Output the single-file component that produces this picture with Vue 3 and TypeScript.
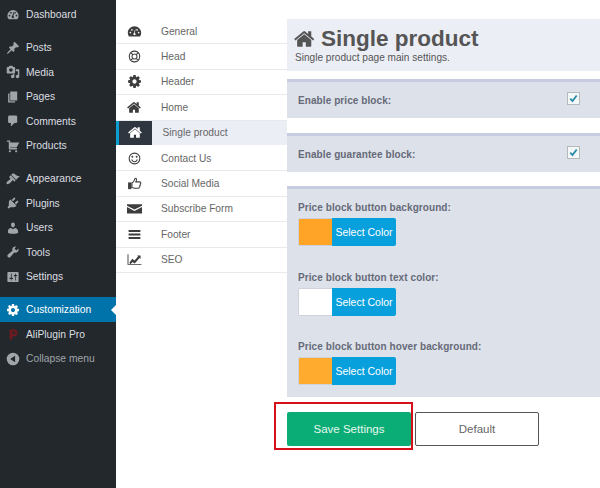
<script setup lang="ts">
interface SideItem { label: string; icon: string; active?: boolean; gap?: boolean; dim?: boolean }

const COG = 'M1152 896q0-106-75-181t-181-75-181 75-75 181 75 181 181 75 181-75 75-181zm512-109v222q0 12-8 23t-20 13l-185 28q-19 54-39 91 35 50 107 138 10 12 10 25t-9 23q-27 37-99 108t-94 71q-12 0-26-9l-138-108q-44 23-91 38-16 136-29 186-7 28-36 28h-222q-14 0-24.5-8.5t-11.5-21.5l-28-184q-49-16-90-37l-141 107q-10 9-25 9-14 0-25-11-126-114-165-168-7-10-7-23 0-12 8-23 15-21 51-66.5t54-70.5q-27-50-41-99l-183-27q-13-2-21-12.5t-8-23.5v-222q0-12 8-23t19-13l186-28q14-46 39-92-40-57-107-138-10-12-10-24 0-10 9-23 26-36 98.5-107.5t94.5-71.5q13 0 26 10l138 107q44-23 91-38 16-136 29-186 7-28 36-28h222q14 0 24.5 8.5t11.5 21.5l28 184q49 16 90 37l142-107q9-9 24-9 13 0 25 10 129 119 165 170 7 8 7 22 0 12-8 23-15 21-51 66.5t-54 70.5q26 50 41 98l183 28q13 2 21 12.5t8 23.5z'
const HOME = 'M1408 992v480q0 26-19 45t-45 19h-384v-384h-256v384h-384q-26 0-45-19t-19-45v-480q0-1 .5-3t.5-3l575-474 575 474q1 2 1 6zm223-69l-62 74q-8 9-21 11h-3q-13 0-21-7l-692-577-692 577q-12 8-24 7-13-2-21-11l-62-74q-8-10-7-23.5t11-21.5l719-599q32-26 76-26t76 26l244 204v-195q0-14 9-23t23-9h192q14 0 23 9t9 23v408l219 182q10 8 11 21.5t-7 23.5z'
const GAUGE = 'M896 256C456 256 96 616 96 1056c0 150 42 290 114 410 12 20 34 30 56 30h1260c22 0 44-10 56-30 72-120 114-260 114-410 0-440-360-800-800-800zM400 1120a96 96 0 1 1 0-192 96 96 0 0 1 0 192zm192-320a96 96 0 1 1 0-192 96 96 0 0 1 0 192zm304 540c-80 0-144-64-144-144 0-60 36-110 88-132l120-420 60 16-100 420c50 24 120 70 120 116 0 80-64 144-144 144zm304-540a96 96 0 1 1 0-192 96 96 0 0 1 0 192zm192 320a96 96 0 1 1 0-192 96 96 0 0 1 0 192z'
const LIFE_LINES = 'M896 256a640 640 0 1 0 .01 0zM896 596a300 300 0 1 0 .01 0zM684 684L443 443M1108 684L1349 443M684 1108L443 1349M1108 1108L1349 1349'
const SMILE = 'M896 192a704 704 0 1 0 0 1408 704 704 0 0 0 0-1408zm0 128a576 576 0 1 1 0 1152 576 576 0 0 1 0-1152zM640 576a112 112 0 1 0 0 224 112 112 0 0 0 0-224zm512 0a112 112 0 1 0 0 224 112 112 0 0 0 0-224zM500 1010c60 210 220 330 396 330s336-120 396-330l-122-36c-44 150-154 238-274 238s-230-88-274-238z'
const CUFF = 'M128 768h400v800H128z'
const HAND = 'M590 830C700 790 860 600 900 430C920 330 930 270 1010 270C1130 270 1160 400 1120 520L1060 700H1500C1600 700 1650 770 1650 840C1650 900 1620 940 1580 970C1610 1040 1590 1100 1540 1140C1560 1210 1530 1270 1480 1300C1490 1400 1420 1470 1310 1470H1040C860 1470 720 1400 590 1370Z'
const MAIL = 'M0 384h1792v180L896 1030 0 564zM0 720l896 460 896-460v760H0z'
const BARS = 'M192 352h1408v256H192zM192 768h1408v256H192zM192 1184h1408v256H192z'
const CHART = 'M64 256h110v1170h1554v110H64zM300 1240l340-420 260 190 420-470-120-110h420v400l-120-120-580 660-260-190-260 300z'

const PIN = 'M10.44 3.02l1.82-1.82 6.36 6.35-1.83 1.82c-1.05-.68-2.48-.57-3.41.36l-.75.75c-.92.93-1.04 2.35-.35 3.41l-1.83 1.82-2.41-2.41-2.8 2.79c-.42.42-3.38 2.71-3.8 2.29s1.86-3.39 2.28-3.81l2.79-2.79L4.1 9.36l1.83-1.82c1.05.69 2.48.57 3.4-.36l.75-.75c.93-.92 1.05-2.35.36-3.41z'
const MEDIA = 'M13 11V4c0-.55-.45-1-1-1h-1.670L9 1H5L3.670 3H2c-.55 0-1 .45-1 1v7c0 .55.45 1 1 1h10c.55 0 1-.45 1-1zM7 4.500c1.380 0 2.500 1.120 2.500 2.500S8.380 9.500 7 9.500 4.500 8.380 4.500 7 5.620 4.500 7 4.500zM14 6h5v10.500c0 1.380-1.120 2.500-2.500 2.500S14 17.880 14 16.500s1.120-2.500 2.500-2.500c.17 0 .34.020.5.050V9h-3V6zm-4 8.050V13h2v3.500c0 1.380-1.120 2.500-2.500 2.500S7 17.880 7 16.500 8.120 14 9.500 14c.17 0 .34.020.5.050z'
const PAGES = 'M6 15V2h10v13H6zm-1 1h8v2H3V5h2v11z'
const COMMENT = 'M5 2h9c1.100 0 2 .9 2 2v7c0 1.100-.9 2-2 2h-2l-5 5v-5H5c-1.100 0-2-.9-2-2V4c0-1.100.9-2 2-2z'
const CART = 'M6 13h9c.55 0 1 .45 1 1s-.45 1-1 1H5c-.55 0-1-.45-1-1V4H2c-.55 0-1-.45-1-1s.45-1 1-1h3c.55 0 1 .45 1 1v2h13l-4 7H6v1zm-.5 3c.83 0 1.500.67 1.500 1.500S6.330 19 5.500 19 4 18.330 4 17.500 4.670 16 5.500 16zm9 0c.83 0 1.500.67 1.500 1.500s-.670 1.500-1.500 1.500-1.500-.670-1.500-1.500.670-1.500 1.500-1.500z'
const BRUSH = 'M14.480 11.060L7.410 3.990l1.500-1.500c.5-.56 2.300-.47 3.510.32 1.210.8 1.430 1.280 2.910 2.100 1.180.64 2.450 1.260 4.450.85zm-.71.71L6.700 4.700 4.930 6.470c-.39.39-.39 1.020 0 1.410l1.060 1.060c.39.39.39 1.030 0 1.420-.6.6-1.430 1.110-2.210 1.690-.35.26-.7.53-1.010.84C1.430 13.230.18 16.500.9 17.170c.71.72 4.040-.46 5.370-1.860.37-.37.7-.74.99-1.130.57-.74 1.070-1.500 1.620-2.040.39-.39 1.020-.39 1.410 0l1.060 1.060c.39.39 1.020.39 1.410 0z'
const PLUG = 'M13.110 4.360L9.870 7.600 8 5.730l3.240-3.240c.35-.34 1.050-.2 1.560.32.52.51.66 1.210.31 1.550zm-8 1.770l.91-1.120 9.010 9.010-1.190.84c-.71.71-2.630 1.160-3.820 1.160H6.140L4.900 17.260c-.59.59-1.540.59-2.120 0-.59-.58-.59-1.530 0-2.120l1.240-1.240v-3.880c0-1.130.4-3.190 1.090-3.890zm7.260 3.970l3.240-3.240c.34-.35 1.040-.21 1.550.31.52.51.66 1.210.31 1.550l-3.240 3.250z'
const USER = 'M10 9.250c-2.270 0-2.730-3.440-2.730-3.440C7 4.020 7.820 2 9.970 2c2.160 0 2.980 2.020 2.710 3.810 0 0-.41 3.440-2.680 3.440zm0 2.570L12.720 10c2.390 0 4.520 2.330 4.520 4.530v2.490s-3.650 1.130-7.240 1.130c-3.650 0-7.240-1.130-7.240-1.130v-2.490c0-2.250 1.940-4.480 4.470-4.480z'
const WRENCH = 'M16.680 9.770c-1.340 1.340-3.300 1.670-4.950.99l-5.410 6.520c-.99.99-2.590.99-3.580 0s-.99-2.590 0-3.570l6.520-5.420c-.68-1.650-.35-3.610.99-4.950 1.280-1.280 3.120-1.620 4.720-1.060l-2.890 2.890 2.820 2.820 2.860-2.870c.53 1.580.18 3.390-1.080 4.650z'
const SLIDERS = 'M18 16V4c0-.55-.45-1-1-1H3c-.55 0-1 .45-1 1v12c0 .55.45 1 1 1h14c.55 0 1-.45 1-1zM8 11h1c.55 0 1 .45 1 1s-.45 1-1 1H8v1.500c0 .28-.22.5-.5.5s-.5-.22-.5-.5V13H6c-.55 0-1-.45-1-1s.45-1 1-1h1V5.500c0-.28.22-.5.5-.5s.5.22.5.5V11zm5-2h-1c-.55 0-1-.45-1-1s.45-1 1-1h1V5.500c0-.28.22-.5.5-.5s.5.22.5.5V7h1c.55 0 1 .45 1 1s-.45 1-1 1h-1v5.500c0 .28-.22.5-.5.5s-.5-.22-.5-.5V9z'
const FLAG = 'M3 1h11l3 3v6l-3 3H8v6H3zm5 4v4h5V5z'
const COLLAPSE = 'M10 1a9 9 0 1 0 0 18 9 9 0 0 0 0-18zm3 4.500v9L6 10z'
const WP_GAUGE = 'M10 3a8 8 0 0 0-8 8c0 2 .7 3.800 2 5h12c1.300-1.200 2-3 2-5a8 8 0 0 0-8-8zM5 12a1.200 1.200 0 1 1 0-2.400A1.200 1.200 0 0 1 5 12zm2-4a1.200 1.200 0 1 1 0-2.400A1.200 1.200 0 0 1 7 8zm3 6.500a1.800 1.800 0 0 1-1-3.300L10.500 6l1 .3-1 5a1.800 1.800 0 0 1-.5 3.200zM13 8a1.200 1.200 0 1 1 0-2.400A1.200 1.200 0 0 1 13 8zm2 4a1.200 1.200 0 1 1 0-2.400A1.200 1.200 0 0 1 15 12z'

const sideGroups: SideItem[][] = [
  [{ label: 'Dashboard', icon: WP_GAUGE }],
  [
    { label: 'Posts', icon: PIN },
    { label: 'Media', icon: MEDIA },
    { label: 'Pages', icon: PAGES },
    { label: 'Comments', icon: COMMENT },
    { label: 'Products', icon: CART },
  ],
  [
    { label: 'Appearance', icon: BRUSH },
    { label: 'Plugins', icon: PLUG },
    { label: 'Users', icon: USER },
    { label: 'Tools', icon: WRENCH },
    { label: 'Settings', icon: SLIDERS },
  ],
  [
    { label: 'Customization', icon: COG, active: true },
    { label: 'AliPlugin Pro', icon: FLAG },
    { label: 'Collapse menu', icon: COLLAPSE, dim: true },
  ],
]

interface TabItem { label: string; path?: string; outline?: string; active?: boolean }
const tabs: TabItem[] = [
  { label: 'General', path: GAUGE },
  { label: 'Head', outline: LIFE_LINES },
  { label: 'Header', path: COG },
  { label: 'Home', path: HOME },
  { label: 'Single product', path: HOME, active: true },
  { label: 'Contact Us', path: SMILE },
  { label: 'Social Media', path: CUFF, outline: HAND },
  { label: 'Subscribe Form', path: MAIL },
  { label: 'Footer', path: BARS },
  { label: 'SEO', path: CHART },
]

const checks = ['Enable price block:', 'Enable guarantee block:']
const colors = [
  { label: 'Price block button background:', value: '#ffa426' },
  { label: 'Price block button text color:', value: '#ffffff' },
  { label: 'Price block button hover background:', value: '#ffab2e' },
]
</script>

<template>
  <div class="page">
    <aside class="side">
      <div v-for="(group, g) in sideGroups" :key="g" class="side-group">
        <div
          v-for="item in group"
          :key="item.label"
          class="side-item"
          :class="{ active: item.active, dim: item.dim }"
        >
          <svg v-if="item.active" class="side-icon" viewBox="0 0 1792 1792"><path :d="item.icon" /></svg>
          <svg v-else class="side-icon" :class="{ flag: item.label === 'AliPlugin Pro' }" viewBox="0 0 20 20"><path :d="item.icon" /></svg>
          <span>{{ item.label }}</span>
          <i v-if="item.active" class="notch"></i>
        </div>
      </div>
    </aside>

    <nav class="tabs">
      <div v-for="tab in tabs" :key="tab.label" class="tab" :class="{ active: tab.active }">
        <span class="tab-icon">
          <svg viewBox="0 0 1792 1792">
            <path v-if="tab.path" :d="tab.path" />
            <path v-if="tab.outline" class="line" :d="tab.outline" />
          </svg>
        </span>
        <span class="tab-label">{{ tab.label }}</span>
      </div>
    </nav>

    <main class="content">
      <header class="head">
        <h1>
          <svg viewBox="0 0 1792 1792"><path :d="HOME" /></svg>
          Single product
        </h1>
        <p>Single product page main settings.</p>
      </header>

      <section v-for="c in checks" :key="c" class="block check-row">
        <label>{{ c }}</label>
        <span class="checkbox">
          <svg viewBox="0 0 12 12"><path d="M2.500 6.200l2.400 2.600 4.600-6" /></svg>
        </span>
      </section>

      <section class="block colors">
        <div v-for="c in colors" :key="c.label" class="color-field">
          <label>{{ c.label }}</label>
          <div class="picker">
            <span class="swatch" :style="{ background: c.value }"></span>
            <span class="pick-btn">Select Color</span>
          </div>
        </div>
      </section>

      <div class="actions">
        <button class="save" type="button">Save Settings</button>
        <button class="reset" type="button">Default</button>
        <i class="highlight"></i>
      </div>
    </main>
  </div>
</template>

<style>
html, body { margin: 0; background: #fff; overflow: hidden; }
</style>

<style scoped>
.page {
  display: flex;
  width: 600px;
  height: 488px;
  overflow: hidden;
  font-family: "Liberation Sans", Arial, sans-serif;
  background: #fff;
}
.side {
  width: 116px;
  flex: none;
  background: #23282d;
  padding-top: 2.300px;
  box-sizing: border-box;
  display: flex;
  flex-direction: column;
  gap: 8.500px;
}
.side-item {
  position: relative;
  height: 24.500px;
  display: flex;
  align-items: center;
  color: #dcdee0;
  font-size: 10.300px;
  padding-left: 6px;
}
.side-icon {
  width: 14px;
  height: 14px;
  margin-right: 6px;
  fill: #a0a5aa;
  flex: none;
}
.side-icon.flag { fill: #6e1a1e; width: 11px; height: 11px; margin: 0 7px 0 2px; }
.side-item.active { background: #0073aa; color: #fff; }
.side-item.active .side-icon { fill: #fff; }
.side-item.dim { color: #a0a5aa; }
.notch {
  position: absolute;
  right: 0;
  top: 50%;
  margin-top: -5px;
  border: 5px solid transparent;
  border-left-width: 0;
  border-right-color: #fff;
}
.tabs {
  width: 171px;
  flex: none;
  padding-top: 19px;
  box-sizing: border-box;
}
.tab {
  height: 25.400px;
  box-sizing: border-box;
  display: flex;
  align-items: center;
  border-bottom: 1px solid #e8e9ec;
  color: #666;
  font-size: 10.200px;
}
.tab-icon {
  width: 36px;
  margin-right: 9px;
  height: 100%;
  display: flex;
  align-items: center;
  justify-content: center;
}
.tab-icon svg { width: 15px; height: 15px; fill: #3d3d3d; }
.tab-icon .line { fill: none; stroke: #3d3d3d; stroke-width: 130; }
.tab.active {
  background: #eceef6;
  border-bottom-color: #fff;
}
.tab.active .tab-icon {
  background: #2f3640;
  border-left: 3px solid #0a9fd0;
  box-sizing: border-box;
  margin-right: 10.500px;
}
.tab.active .tab-icon svg { fill: #fff; }
.content {
  flex: 1;
  min-width: 0;
  padding-top: 19px;
  display: flex;
  flex-direction: column;
}
.head {
  height: 52px;
  box-sizing: border-box;
  background: #eceef6;
  padding: 6px 0 0 8px;
  color: #555;
}
.head h1 {
  margin: 0;
  font-size: 22.500px;
  line-height: 28px;
  font-weight: 700;
  display: flex;
  align-items: center;
  gap: 5px;
}
.head h1 svg { width: 22px; height: 22px; fill: #555; margin-left: -1px; }
.head p {
  margin: -2px 0 0;
  font-size: 10.100px;
  line-height: 13px;
  color: #555;
}
.block {
  background: #dde1ea;
  border-top: 3px solid #c7cce0;
  box-sizing: border-box;
}
.block label {
  font-size: 10px;
  font-weight: 700;
  letter-spacing: 0.08px;
  color: #666a78;
}
.check-row {
  height: 39px;
  margin-top: 8px;
  display: flex;
  align-items: center;
  justify-content: space-between;
  padding: 0 20px 0 11px;
}
.check-row + .check-row { margin-top: 15px; }
.checkbox {
  width: 11px;
  height: 11px;
  background: #f4f8f8;
  border: 1px solid #b4b9b9;
  display: flex;
  margin-top: -3px;
}
.checkbox svg { fill: none; stroke: #2a8ca8; stroke-width: 2; width: 100%; height: 100%; }
.colors {
  margin-top: 14px;
  height: 211px;
  padding: 11px 11px 0;
  display: flex;
  flex-direction: column;
  gap: 23.500px;
}
.color-field label { display: block; line-height: 15px; margin-bottom: 3px; }
.picker { display: flex; height: 28px; width: 98px; }
.swatch {
  width: 34px;
  box-sizing: border-box;
  border: 1px solid #cfd2da;
  border-right: 0;
  border-radius: 2px 0 0 2px;
}
.pick-btn {
  flex: 1;
  background: #08a0dc;
  color: #fff;
  font-size: 10.500px;
  display: flex;
  align-items: center;
  justify-content: center;
  border-radius: 0 2px 2px 0;
}
.actions {
  position: relative;
  margin-top: 15px;
  display: flex;
  gap: 4px;
}
.actions button {
  width: 124px;
  height: 34px;
  box-sizing: border-box;
  font: 11.500px "Liberation Sans", Arial, sans-serif;
  border-radius: 2px;
  padding: 0;
}
.save { background: #0aad76; color: #e8f8f0; border: 0; }
.reset { background: #fff; color: #666; border: 1px solid #555; }
.highlight {
  position: absolute;
  left: -13px;
  top: -10px;
  width: 139px;
  height: 48px;
  box-sizing: border-box;
  border: 2px solid #d5101a;
}
</style>
